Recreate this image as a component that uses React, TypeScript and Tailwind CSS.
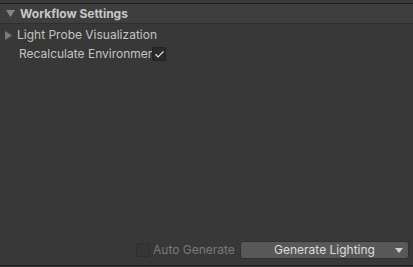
import { Check } from "lucide-react";

export default function App() {
  return (
    <div
      className="flex h-[267px] w-[413px] flex-col bg-[#383838] text-[12px] text-[#c4c4c4]"
      style={{ fontFamily: "Inter, 'Noto Sans', sans-serif" }}
    >
      {/* top strip + border */}
      <div className="h-[3px] bg-[#393939]" />
      <div className="h-px bg-[#1c1c1c]" />

      {/* Section header */}
      <div className="flex h-[20px] items-center border-b border-[#2f2f2f] bg-[#3e3e3e] pl-[6px]">
        <svg width="9" height="8" viewBox="0 0 9 8" className="mr-[5px]">
          <path d="M0 0 L9 0 L4.5 7 Z" fill="#858585" />
        </svg>
        <span className="font-bold text-[#c8c8c8]">Workflow Settings</span>
      </div>

      {/* Rows */}
      <div className="flex flex-col pt-[2px]">
        <div className="flex h-[18px] items-center pl-[5px]">
          <svg width="7" height="9" viewBox="0 0 7 9" className="mr-[5px]">
            <path d="M0 0 L7 4.5 L0 9 Z" fill="#7a7a7a" />
          </svg>
          <span>Light Probe Visualization</span>
        </div>
        <div className="flex h-[20px] items-center pl-[19px]">
          <span className="w-[133px] overflow-hidden whitespace-nowrap">Recalculate Environment Lighting</span>
          <div className="flex h-[14px] w-[14px] items-center justify-center rounded-[2px] border border-[#212121] bg-[#2a2a2a]">
            <Check size={11} strokeWidth={2.5} color="#e6e6e6" />
          </div>
        </div>
      </div>

      <div className="flex-1" />

      {/* Bottom bar */}
      <div className="flex h-[19px] items-center pl-[136px] pr-[4px]">
        <div className="h-[14px] w-[14px] rounded-[2px] border border-[#2e2e2e] bg-[#363636]" />
        <span className="ml-[3px] w-[87px] text-[#7a7a7a]">Auto Generate</span>
        <div className="relative flex h-[18px] flex-1 items-center justify-center rounded-[3px] border border-[#303030] bg-[#585858] text-[#dcdcdc]">
          <span>Generate Lighting</span>
          <svg width="8" height="5" viewBox="0 0 8 5" className="absolute right-[5px] top-[6px]">
            <path d="M0 0 L8 0 L4 5 Z" fill="#d0d0d0" />
          </svg>
        </div>
      </div>
      <div className="h-[6px]" />
      <div className="h-px bg-[#1c1c1c]" />
      <div className="h-px bg-[#383838]" />
    </div>
  );
}
